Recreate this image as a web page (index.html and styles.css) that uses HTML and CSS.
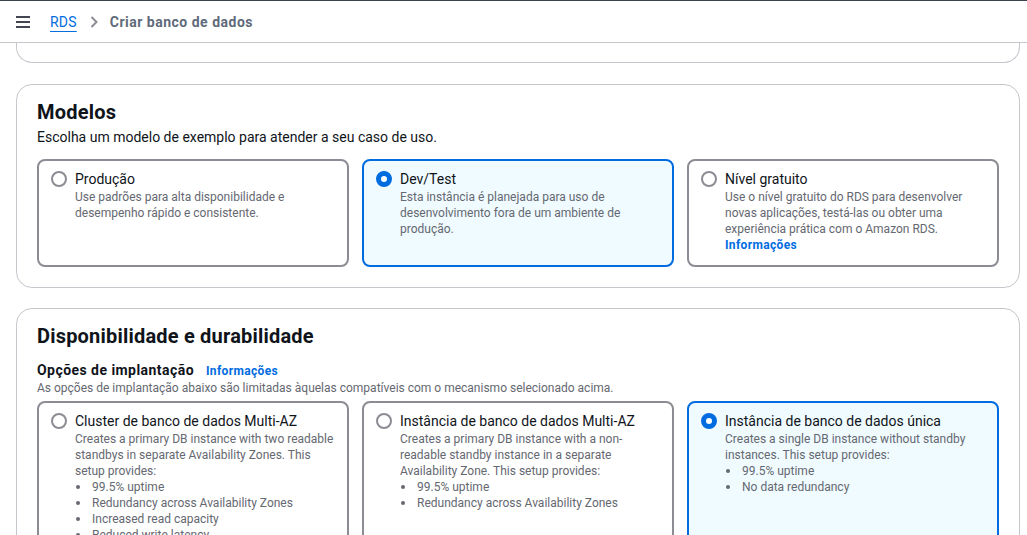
FILE: index.html
```html
<!DOCTYPE html>
<html lang="pt-BR">
<head>
<meta charset="utf-8">
<title>Criar banco de dados</title>
<link rel="stylesheet" href="styles.css">
</head>
<body>
<header class="topbar">
  <svg class="menu" width="14" height="12" viewBox="0 0 14 12"><rect x="0" y="0" width="14" height="2" fill="#424650"/><rect x="0" y="5" width="14" height="2" fill="#424650"/><rect x="0" y="10" width="14" height="2" fill="#424650"/></svg>
  <nav class="crumbs">
    <a class="crumb-link" href="#">RDS</a>
    <svg class="chev" width="8" height="12" viewBox="0 0 8 12"><path d="M1.5 1 L6.5 6 L1.5 11" fill="none" stroke="#8c8c94" stroke-width="2"/></svg>
    <span class="crumb-current">Criar banco de dados</span>
  </nav>
</header>
<main class="page">
  <div class="prev-container"></div>

  <section class="container">
    <h2 class="heading">Modelos</h2>
    <p class="subtitle">Escolha um modelo de exemplo para atender a seu caso de uso.</p>
    <div class="tiles">
      <div class="tile">
        <span class="radio"></span>
        <div class="tile-body">
          <div class="tile-title">Produção</div>
          <div class="tile-desc">Use padrões para alta disponibilidade e desempenho rápido e consistente.</div>
        </div>
      </div>
      <div class="tile selected">
        <span class="radio checked"></span>
        <div class="tile-body">
          <div class="tile-title">Dev/Test</div>
          <div class="tile-desc">Esta instância é planejada para uso de desenvolvimento fora de um ambiente de produção.</div>
        </div>
      </div>
      <div class="tile">
        <span class="radio"></span>
        <div class="tile-body">
          <div class="tile-title">Nível gratuito</div>
          <div class="tile-desc">Use o nível gratuito do RDS para desenvolver novas aplicações, testá-las ou obter uma experiência prática com o Amazon RDS.</div>
          <a class="info-link" href="#">Informações</a>
        </div>
      </div>
    </div>
  </section>

  <section class="container">
    <h2 class="heading">Disponibilidade e durabilidade</h2>
    <div class="field-label">
      <span class="label-text">Opções de implantação</span>
      <a class="info-link" href="#">Informações</a>
    </div>
    <p class="field-desc">As opções de implantação abaixo são limitadas àquelas compatíveis com o mecanismo selecionado acima.</p>
    <div class="tiles">
      <div class="tile">
        <span class="radio"></span>
        <div class="tile-body">
          <div class="tile-title">Cluster de banco de dados Multi-AZ</div>
          <div class="tile-desc">Creates a primary DB instance with two readable standbys in separate Availability Zones. This setup provides:</div>
          <ul class="bullets">
            <li>99.5% uptime</li>
            <li>Redundancy across Availability Zones</li>
            <li>Increased read capacity</li>
            <li>Reduced write latency</li>
          </ul>
        </div>
      </div>
      <div class="tile">
        <span class="radio"></span>
        <div class="tile-body">
          <div class="tile-title">Instância de banco de dados Multi-AZ</div>
          <div class="tile-desc">Creates a primary DB instance with a non-readable standby instance in a separate Availability Zone. This setup provides:</div>
          <ul class="bullets">
            <li>99.5% uptime</li>
            <li>Redundancy across Availability Zones</li>
          </ul>
        </div>
      </div>
      <div class="tile selected">
        <span class="radio checked"></span>
        <div class="tile-body">
          <div class="tile-title">Instância de banco de dados única</div>
          <div class="tile-desc">Creates a single DB instance without standby instances. This setup provides:</div>
          <ul class="bullets">
            <li>99.5% uptime</li>
            <li>No data redundancy</li>
          </ul>
        </div>
      </div>
    </div>
  </section>
</main>
</body>
</html>
```
FILE: styles.css
```css
* { box-sizing: border-box; }
html, body { margin: 0; padding: 0; background: #ffffff; }
body {
  font-family: Roboto, "Liberation Sans", sans-serif;
  color: #0f141a;
  font-size: 14px;
  line-height: 20px;
}
.topbar {
  height: 43px;
  border-top: 1px solid #3d4450;
  border-bottom: 1px solid #c6c6cd;
  display: flex;
  align-items: center;
  padding-left: 16px;
}
.menu { display: block; margin-top: 1px; }
.crumbs {
  display: flex;
  align-items: center;
  margin-left: 20px;
  gap: 12px;
}
.crumb-link {
  color: #006ce0;
  text-decoration: underline;
  text-underline-offset: 4px;
  font-size: 14px;
  letter-spacing: 0.2px;
}
.chev { display: block; margin-left: 1px; }
.crumb-current {
  color: #5f6b7a;
  font-weight: 700;
  font-size: 14px;
  letter-spacing: 0.5px;
}
.page {
  padding: 0 7px 0 16px;
}
.prev-container {
  height: 20px;
  border: 1px solid #c6c6cd;
  border-top: none;
  border-radius: 0 0 16px 16px;
  margin-bottom: 21px;
}
.container {
  border: 1px solid #c6c6cd;
  border-radius: 16px;
  padding: 15px 20px 20px 20px;
  margin-bottom: 20px;
}
.heading {
  margin: 0 0 3px 0;
  font-size: 20px;
  line-height: 24px;
  font-weight: 700;
  letter-spacing: 0.2px;
}
.subtitle {
  margin: 0 0 12px 0;
  font-size: 14px;
  line-height: 20px;
}
.field-label {
  margin-top: 12px;
  display: flex;
  align-items: baseline;
  gap: 12px;
}
.label-text {
  font-weight: 700;
  font-size: 14px;
  line-height: 20px;
  letter-spacing: 0.45px;
}
.field-desc {
  margin: 0 0 5px 0;
  font-size: 12px;
  line-height: 16px;
  color: #656871;
}
.tiles {
  display: grid;
  grid-template-columns: 1fr 1fr 1fr;
  gap: 13px;
}
.tile {
  border: 2px solid #8c8c94;
  border-radius: 8px;
  padding: 8px 12px 12px 12px;
  display: flex;
  gap: 8px;
  background: #ffffff;
}
.tile.selected {
  border-color: #006ce0;
  background: #f0fbff;
}
.radio {
  flex: none;
  width: 16px;
  height: 16px;
  margin-top: 2px;
  border: 2px solid #8c8c94;
  border-radius: 50%;
  background: #ffffff;
}
.radio.checked {
  border: 5px solid #006ce0;
}
.tile-body {
  min-width: 0;
  font-size: 12px;
  line-height: 16px;
}
.tile-title {
  font-size: 14px;
  line-height: 20px;
  color: #0f141a;
}
.tile-desc {
  font-size: 12px;
  line-height: 16px;
  color: #656871;
}
.info-link {
  display: inline-block;
  color: #006ce0;
  font-weight: 700;
  font-size: 12px;
  line-height: 16px;
  letter-spacing: 0.35px;
  text-decoration: none;
}
.bullets {
  list-style: none;
  margin: 0;
  padding: 0;
  font-size: 12px;
  line-height: 16px;
  color: #656871;
}
.bullets li {
  display: flex;
  align-items: center;
}
.bullets li::before {
  content: "";
  flex: none;
  width: 4px;
  height: 4px;
  border-radius: 50%;
  background: #656871;
  margin: 0 12px 0 1px;
}
```
